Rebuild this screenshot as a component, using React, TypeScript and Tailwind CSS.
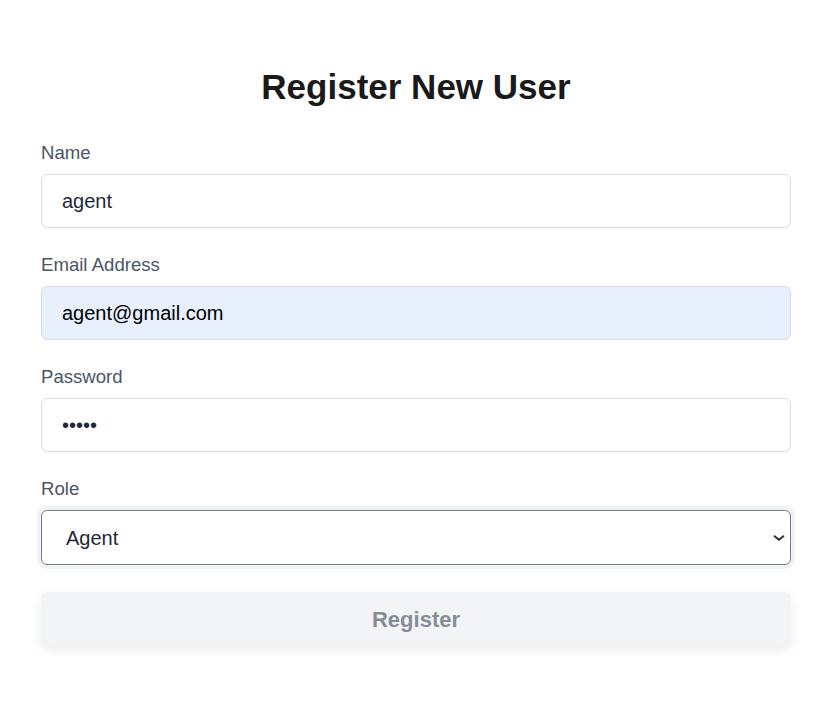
import React, { useState } from 'react';

const labelCls = 'block text-[18.6px] leading-[26px] text-[#4b5563] mb-2';
const inputCls =
  'w-full h-[54px] rounded-md border border-[#dadce0] px-5 text-[20px] text-[#1f2937] outline-none';

const App: React.FC = () => {
  const [name, setName] = useState('agent');
  const [email, setEmail] = useState('agent@gmail.com');
  const [password, setPassword] = useState('12345');
  const [role, setRole] = useState('Agent');

  return (
    <div className="min-h-screen bg-white font-['Liberation_Sans',Arial,sans-serif]">
      <form className="ml-[41px] w-[750px] pt-[67px] flex flex-col" onSubmit={(e) => e.preventDefault()}>
        <h2 className="text-center text-[35px] leading-[40px] font-bold text-[#1a1a1a] mb-[33px]">
          Register New User
        </h2>

        <div className="mb-6">
          <label className={labelCls}>Name</label>
          <input className={inputCls + ' bg-white'} value={name} onChange={(e) => setName(e.target.value)} />
        </div>

        <div className="mb-6">
          <label className={labelCls}>Email Address</label>
          <input
            className={inputCls + ' bg-[#e8f0fe] text-black'}
            value={email}
            onChange={(e) => setEmail(e.target.value)}
          />
        </div>

        <div className="mb-6">
          <label className={labelCls}>Password</label>
          <input
            type="password"
            className={inputCls + ' bg-white'}
            value={password}
            onChange={(e) => setPassword(e.target.value)}
          />
        </div>

        <div className="mb-[27px]">
          <label className={labelCls}>Role</label>
          <div className="relative">
            <select
              className="w-full h-[55px] appearance-none rounded-md border border-[#767d8a] bg-white pl-6 pr-10 text-[20px] text-[#1f2937] outline-none ring-4 ring-[#f1f2f4]"
              value={role}
              onChange={(e) => setRole(e.target.value)}
            >
              <option>Agent</option>
              <option>Admin</option>
              <option>User</option>
            </select>
            <svg
              className="pointer-events-none absolute right-[5px] top-1/2 -translate-y-1/2 h-[14px] w-[14px] text-[#333]"
              viewBox="0 0 16 16"
              fill="none"
              stroke="currentColor"
              strokeWidth={2.4}
              strokeLinecap="round"
              strokeLinejoin="round"
            >
              <path d="M3 6l5 4 5-4" />
            </svg>
          </div>
        </div>

        <button
          type="submit"
          disabled
          className="h-[54px] w-full rounded-md bg-[#f3f4f6] text-[22px] font-bold text-[#878d96] shadow-[0_4px_12px_rgba(0,0,0,0.08)]"
        >
          Register
        </button>
      </form>
    </div>
  );
};

export default App;
